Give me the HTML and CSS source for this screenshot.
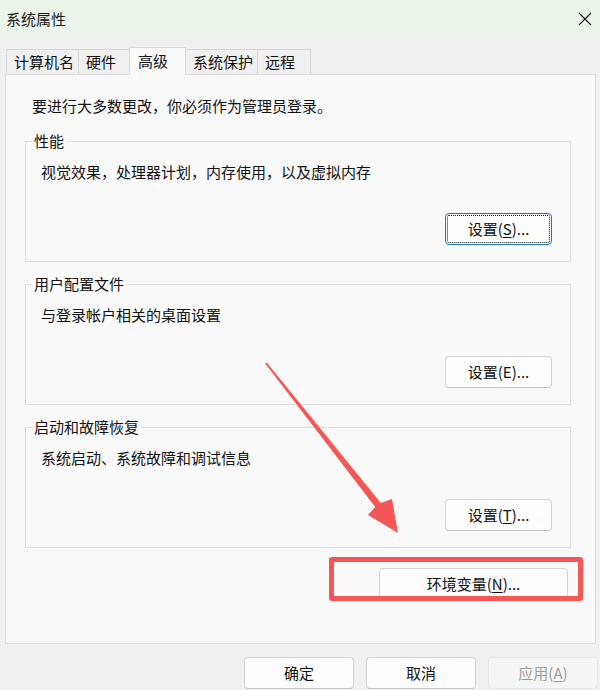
FILE: index.html
```html
<!DOCTYPE html>
<html lang="zh-CN">
<head>
<meta charset="utf-8">
<title>系统属性</title>
<link rel="stylesheet" href="styles.css">
</head>
<body>
<div class="titlebar">
  <span class="title">系统属性</span>
  <svg class="close" width="14" height="14" viewBox="0 0 14 14"><path d="M1 1 L13 13 M13 1 L1 13" stroke="#111" stroke-width="1.1" fill="none"/></svg>
</div>
<div class="content">
  <div class="tabs">
    <div class="tab">计算机名</div>
    <div class="tab">硬件</div>
    <div class="tab tab-active">高级</div>
    <div class="tab">系统保护</div>
    <div class="tab">远程</div>
  </div>
  <div class="panel">
    <div class="note">要进行大多数更改，你必须作为管理员登录。</div>
    <div class="group group-first">
      <div class="legend">性能</div>
      <div class="desc">视觉效果，处理器计划，内存使用，以及虚拟内存</div>
      <div class="btn-row"><button class="btn btn-focus">设置(<u>S</u>)...</button></div>
    </div>
    <div class="group">
      <div class="legend">用户配置文件</div>
      <div class="desc">与登录帐户相关的桌面设置</div>
      <div class="btn-row"><button class="btn">设置(E)...</button></div>
    </div>
    <div class="group">
      <div class="legend">启动和故障恢复</div>
      <div class="desc">系统启动、系统故障和调试信息</div>
      <div class="btn-row"><button class="btn">设置(<u>T</u>)...</button></div>
    </div>
    <div class="env-row"><button class="btn btn-env">环境变量(<u>N</u>)...</button></div>
  </div>
</div>
<div class="actions">
  <button class="btn btn-action">确定</button>
  <button class="btn btn-action">取消</button>
  <button class="btn btn-action btn-disabled">应用(<u>A</u>)</button>
</div>
<div class="highlight"></div>
<svg class="arrow" width="600" height="690" viewBox="0 0 600 690">
  <polygon points="266.8,362.4 380.8,502.9 392,499 398,533 368,515 375.2,507.1 265.2,363.6" fill="#f55656"/>
</svg>
</body>
</html>
```
FILE: styles.css
```css
* { box-sizing: border-box; }
html, body {
  margin: 0;
  padding: 0;
}
body {
  width: 600px;
  height: 690px;
  overflow: hidden;
  position: relative;
  background: #f0f0f0;
  font-family: "Noto Sans CJK SC", "Noto Sans", sans-serif;
  font-size: 15px;
  color: #111;
}
.titlebar {
  height: 37px;
  background: #eaf4e9;
  display: flex;
  align-items: center;
  justify-content: space-between;
  padding: 0 7px 0 6px;
}
.title {
  font-size: 15px;
  line-height: 20px;
  color: #1a1a1a;
}
.close { display: block; margin-right: 1px; }
.content {
  padding: 10px 0 0 5px;
}
.tabs {
  display: flex;
  align-items: flex-end;
  height: 27px;
  margin-left: 1px;
}
.tab {
  height: 25px;
  line-height: 24px;
  min-width: 54px;
  padding: 0 4px 0 7px;
  border: 1px solid #d9d9d9;
  border-bottom: none;
  margin-right: -1px;
  background: #f0f0f0;
  white-space: nowrap;
}
.tab-active {
  height: 28px;
  line-height: 26px;
  margin: 0 -1px -1px -2px;
  padding: 0 5px 0 8px;
  min-width: 57px;
  background: #f9f9f9;
  position: relative;
  z-index: 1;
}
.panel {
  width: 591px;
  height: 570px;
  border: 1px solid #dcdcdc;
  background: #f9f9f9;
  padding: 21px 24px 0 19px;
}
.note {
  line-height: 20px;
  padding-left: 7px;
}
.group {
  border: 1px solid #dcdcdc;
  margin-top: 22px;
  padding-bottom: 16px;
}
.group-first { margin-top: 25px; }
.legend {
  width: fit-content;
  margin: -12px 0 0 6px;
  padding: 0 2px;
  line-height: 22px;
  background: #f9f9f9;
}
.desc {
  margin-top: 10px;
  padding-left: 15px;
  line-height: 20px;
}
.btn-row {
  display: flex;
  justify-content: flex-end;
  margin-top: 31px;
  padding-right: 18px;
}
.btn {
  font-family: "Noto Sans CJK SC", "Noto Sans", sans-serif;
  font-size: 15px;
  color: #111;
  height: 32px;
  width: 107px;
  background: #fdfdfd;
  border: 1px solid #d3d3d3;
  border-bottom-color: #c4c4c4;
  border-radius: 4px;
  padding: 0;
  line-height: 28px;
}
.btn u { text-underline-offset: 2px; }
.btn-focus {
  border: 1px solid #1a73c8;
  outline: 1px dotted #111;
  outline-offset: -3px;
}
.env-row {
  display: flex;
  justify-content: flex-end;
  margin-top: 20px;
  padding-right: 3px;
}
.btn-env { width: 189px; }
.actions {
  display: flex;
  justify-content: flex-end;
  gap: 12px;
  margin-top: 13px;
  padding-right: 2px;
}
.btn-action { width: 110px; }
.btn-disabled {
  color: #9d9d9d;
  background: #f5f5f5;
  border-color: #e6e6e6;
}
.highlight {
  position: absolute;
  left: 329px;
  top: 557px;
  width: 254px;
  height: 44px;
  border: 5px solid #f55656;
  border-radius: 3px;
}
.arrow {
  position: absolute;
  left: 0;
  top: 0;
  pointer-events: none;
}
```
